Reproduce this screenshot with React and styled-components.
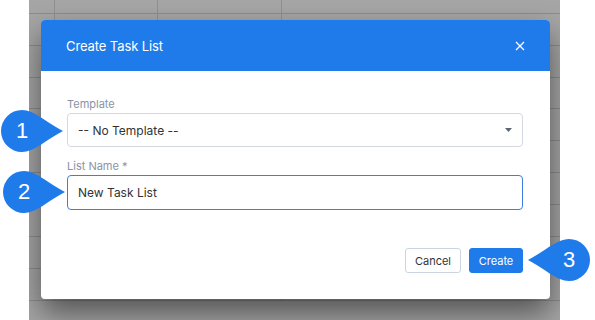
import styled, { createGlobalStyle } from "styled-components";

const GlobalStyle = createGlobalStyle`
  html, body {
    margin: 0;
    padding: 0;
    background: #ffffff;
  }
  * {
    box-sizing: border-box;
  }
`

const Page = styled.div`
  position: relative;
  display: flex;
  width: 595px;
  height: 320px;
  overflow: hidden;
  font-family: Inter, "Noto Sans", sans-serif;
`
const Gutter = styled.div`
  width: ${(props) => props.$w}px;
  flex-shrink: 0;
  background: #ffffff;
`
const Backdrop = styled.div`
  position: relative;
  width: 531px;
  height: 320px;
  background: #ffffff;
  overflow: hidden;
`
const Table = styled.div`
  display: flex;
  flex-direction: column;
`
const Row = styled.div`
  display: flex;
  height: ${(props) => props.$h}px;
  border-bottom: 1px solid #d8d8d8;
`
const Cell = styled.div`
  width: ${(props) => props.$w}px;
  flex-shrink: 0;
  border-right: 1px solid #dedede;
  &:last-child {
    flex: 1;
    border-right: none;
  }
`
const Dim = styled.div`
  position: absolute;
  inset: 0;
  background: rgba(0, 0, 0, 0.35);
`
const Modal = styled.section`
  position: absolute;
  left: 12px;
  top: 20px;
  width: 509px;
  height: 279px;
  background: #ffffff;
  border-radius: 4px;
  overflow: hidden;
  box-shadow: 0 14px 30px rgba(0, 0, 0, 0.5);
  display: flex;
  flex-direction: column;
`
const Header = styled.header`
  display: flex;
  align-items: center;
  justify-content: space-between;
  height: 51px;
  padding: 0 25px;
  background: #1f7bea;
  color: #ffffff;
`
const Title = styled.h2`
  margin: 0;
  font-size: 13px;
  font-weight: 400;
  letter-spacing: -0.1px;
`
const CloseBtn = styled.button`
  display: flex;
  align-items: center;
  justify-content: center;
  width: 11px;
  height: 11px;
  padding: 0;
  border: none;
  background: transparent;
`
const Body = styled.div`
  display: flex;
  flex-direction: column;
  padding: 26px 27px 26px 26px;
  flex: 1;
`
const Field = styled.div`
  display: flex;
  flex-direction: column;
  margin-bottom: ${(props) => props.$mb || 0}px;
`
const Label = styled.label`
  font-size: 11px;
  line-height: 14px;
  color: #8a93a6;
  margin-bottom: 2px;
`
const SelectBox = styled.div`
  display: flex;
  align-items: center;
  justify-content: space-between;
  height: 34px;
  padding: 0 10px 0 10px;
  border: 1px solid #d3d8e3;
  border-radius: 4px;
  font-size: 12px;
  color: #333333;
`
const TextInput = styled.input`
  height: 35px;
  padding: 0 10px;
  border: 1px solid #3b80e0;
  border-radius: 4px;
  font-family: inherit;
  font-size: 12px;
  color: #333333;
  outline: none;
`
const Footer = styled.div`
  display: flex;
  justify-content: flex-end;
  gap: 8px;
  margin-top: auto;
`
const Button = styled.button`
  width: ${(props) => (props.$primary ? 54 : 56)}px;
  height: 25px;
  padding: 0;
  border-radius: 3px;
  font-family: inherit;
  font-size: 11px;
  border: 1px solid ${(props) => (props.$primary ? "#1f7bea" : "#ccd4e0")};
  background: ${(props) => (props.$primary ? "#1f7bea" : "#ffffff")};
  color: ${(props) => (props.$primary ? "#ffffff" : "#333333")};
`
const CalloutWrap = styled.div`
  position: absolute;
  width: 62px;
  height: 42px;
  display: flex;
  justify-content: ${(props) => (props.$flip ? "flex-end" : "flex-start")};
  svg {
    position: absolute;
    inset: 0;
  }
`
const CalloutNum = styled.span`
  position: relative;
  width: 42px;
  height: 42px;
  display: flex;
  align-items: center;
  justify-content: center;
  font-family: "Liberation Sans", Arial, sans-serif;
  font-size: 22px;
  color: #ffffff;
`

function Callout({ x, y, flip, children }) {
  return (
    <CalloutWrap $flip={flip} style={{ left: x, top: y }}>
      <svg width="62" height="42" viewBox="0 0 62 42">
        <path
          d="M21 0 C33 0 45 12 62 21 C45 30 33 42 21 42 A21 21 0 0 1 21 0 Z"
          fill="#1f7bea"
          transform={flip ? "translate(62 0) scale(-1 1)" : undefined}
        />
      </svg>
      <CalloutNum>{children}</CalloutNum>
    </CalloutWrap>
  )
}

const cols = [26, 103, 124, 0]
const rows = [14, 32, 32, 31, 32, 32, 32, 32, 32, 32]

export default function App() {
  return (
    <>
      <GlobalStyle />
      <Page>
        <Gutter $w={29} />
        <Backdrop>
          <Table>
            {rows.map((h, i) => (
              <Row key={i} $h={h}>
                {cols.map((w, j) => <Cell key={j} $w={w} />)}
              </Row>
            ))}
          </Table>
          <Dim />
          <Modal>
            <Header>
              <Title>Create Task List</Title>
              <CloseBtn aria-label="Close">
                <svg width="10" height="10" viewBox="0 0 10 10">
                  <path d="M1 1 L9 9 M9 1 L1 9" stroke="#ffffff" strokeWidth="1.3" />
                </svg>
              </CloseBtn>
            </Header>
            <Body>
              <Field $mb={12}>
                <Label>Template</Label>
                <SelectBox>
                  <span>-- No Template --</span>
                  <svg width="7" height="4" viewBox="0 0 7 4">
                    <path d="M0 0 H7 L3.5 4 Z" fill="#5b6577" />
                  </svg>
                </SelectBox>
              </Field>
              <Field>
                <Label>List Name *</Label>
                <TextInput defaultValue="New Task List" />
              </Field>
              <Footer>
                <Button>Cancel</Button>
                <Button $primary>Create</Button>
              </Footer>
            </Body>
          </Modal>
        </Backdrop>
        <Gutter $w={35} />
        <Callout x={1} y={110}>1</Callout>
        <Callout x={3} y={171}>2</Callout>
        <Callout x={528} y={239} flip>3</Callout>
      </Page>
    </>
  )
}
